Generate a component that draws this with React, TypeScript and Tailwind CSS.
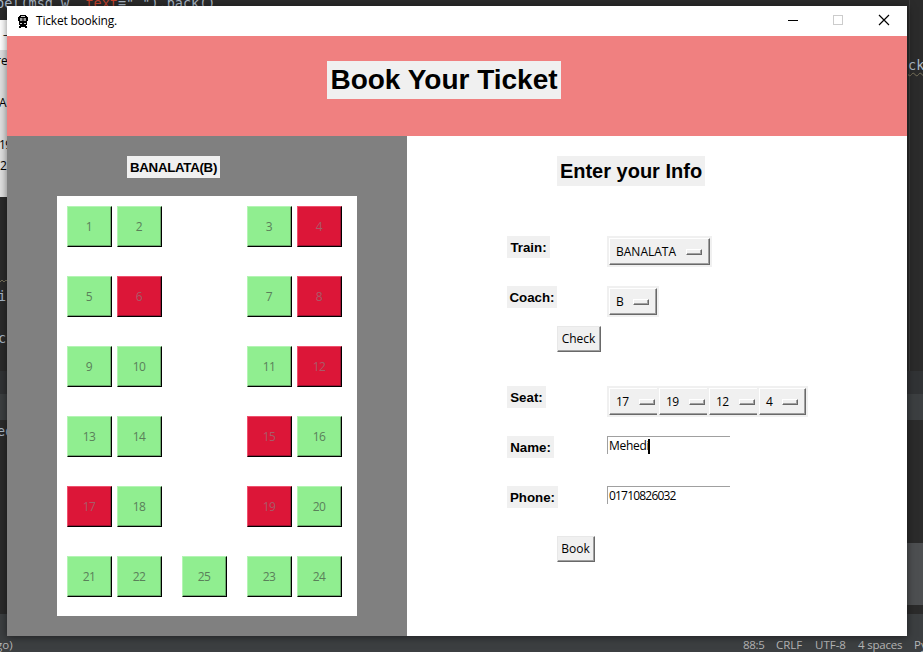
import React from "react";

const ui = "font-['Open_Sans','Noto_Sans',sans-serif] text-[12px]";
const heading = "font-['Liberation_Sans',Arial,sans-serif] font-bold text-black whitespace-nowrap";
const mono = "font-['DejaVu_Sans_Mono',monospace] text-[13.5px]";

const booked = new Set([4, 6, 8, 12, 15, 17, 19]);
const rows: number[][] = [
  [1, 2, 3, 4],
  [5, 6, 7, 8],
  [9, 10, 11, 12],
  [13, 14, 15, 16],
  [17, 18, 19, 20],
];

function Seat({ n }: { n: number }) {
  const tone = booked.has(n)
    ? "bg-[#dc1638] border-t-[#f0506e] border-l-[#f0506e] shadow-[inset_-1px_-1px_0_#a01030] text-[#a85c68]"
    : "bg-[#90ee90] border-t-[#b4f5b4] border-l-[#b4f5b4] shadow-[inset_-1px_-1px_0_#6aa86a] text-[#5a805a]";
  return (
    <button
      className={`${ui} ${tone} flex h-[41px] w-[45px] shrink-0 items-center justify-center border border-r-black border-b-black pr-px leading-none tracking-[-0.5px]`}
    >
      <span>{n}</span>
    </button>
  );
}

function Label({ text, width }: { text: string; width: string }) {
  return (
    <div className="w-[100px] shrink-0">
      <div className={`${heading} ${width} flex h-[22px] items-center justify-center bg-[#f0f0f0] pt-[2px] text-[13.3px]`}>{text}</div>
    </div>
  );
}

function Menu({ value, width, outer }: { value: string; width: string; outer: string }) {
  return (
    <div className={`${outer} h-[31px] shrink-0 overflow-hidden bg-[#f0f0f0] pt-[2px] pl-[2px]`}>
      <div
        className={`${ui} ${width} flex h-[27px] items-center justify-between border border-t-white border-l-white border-r-[#696969] border-b-[#696969] pr-[7px] pl-[6px] leading-none text-black shadow-[inset_-1px_-1px_0_#a0a0a0]`}
      >
        <span className={value.length > 2 ? "" : "tracking-[-0.6px]"}>{value}</span>
        <i className="h-[6px] w-[16px] border border-t-white border-l-white border-r-[#696969] border-b-[#696969] shadow-[inset_-1px_-1px_0_#a0a0a0]" />
      </div>
    </div>
  );
}

function PushButton({ text, width }: { text: string; width: string }) {
  return (
    <button
      className={`${ui} ${width} ml-[50px] flex h-[26px] items-center justify-center border border-t-[#e8e8e8] border-l-[#e8e8e8] border-r-[#696969] border-b-[#696969] bg-[#f0f0f0] pr-px leading-none text-black shadow-[inset_-1px_-1px_0_#a0a0a0]`}
    >
      {text}
    </button>
  );
}

function Entry({ value, caret, tracking }: { value: string; caret?: boolean; tracking: string }) {
  return (
    <div className={`${ui} flex h-[18px] w-[123px] items-center border-t border-l border-[#a0a0a0] pt-px pl-[1px] leading-none text-black`}>
      <span className={tracking}>{value}</span>
      {caret && <i className="-ml-px h-[15px] w-[2px] bg-black" />}
    </div>
  );
}

function Editor() {
  return (
    <div className="flex h-full flex-col bg-[#2b2b2b] font-['Open_Sans',sans-serif] text-[12px] text-[#a9b7c6]">
      <div className="flex h-[371px] justify-between">
        <div className="flex w-[300px] flex-col">
          <div className={`${mono} h-5 overflow-hidden whitespace-pre`}>
            <div className="-mt-[6px] -ml-[4px] leading-[18px]">
              bel(msg_w<span className="text-[#cc7832]">, </span>
              <span className="text-[#c4432e]">text</span>="_").pack()
            </div>
          </div>
          <div className="h-[177px] w-[7px] overflow-hidden bg-[#e1e1e1] whitespace-nowrap text-black">
            <div className="h-[30px] bg-white pl-[3px] text-[10px] leading-[28px]">–</div>
            <div className="-ml-[4px] h-[44px] leading-[22px]">re</div>
            <div className="-ml-px h-[42px] leading-[18px]">A</div>
            <div className="-ml-px h-[21px] leading-[18px] tracking-[-0.6px]">19</div>
            <div className="leading-[18px]">2</div>
          </div>
          <div className={`${mono} h-[174px] w-[7px] overflow-hidden pt-[77px] leading-[22px]`}>
            <div className="-mt-px h-[22px]">
              <svg className="h-[22px] w-[7px]" viewBox="0 0 7 22"><path d="M0 9l2-2 2 2 2-2 1 1" fill="none" stroke="#77715a" /></svg>
            </div>
            <div className="-mt-[10px] -ml-[2px] h-[42px]">i</div>
            <div className="-ml-[2px]">c</div>
          </div>
        </div>
        <div className={`${mono} h-full w-[14px] border-l border-[#3d3d3d] pt-[56px] leading-[18px]`}>
          <span className="-ml-[2px] underline decoration-[#77715a] decoration-wavy decoration-1 underline-offset-2">ck</span>
        </div>
      </div>
      <div className="h-[23px] shrink-0 bg-[#313335]" />
      <div className="h-[26px] shrink-0 bg-[#3c3f41]" />
      <div className="flex h-[194px] shrink-0 justify-between">
        <div className={`${mono} flex w-[7px] flex-col overflow-hidden`}>
          <div className="-ml-[3px] h-[193px] leading-[22px]">ed</div>
        </div>
        <div className="flex w-[16px] flex-col">
          <div className="h-[123px]" />
          <div className="h-[62px] bg-[#4d4f51]" />
        </div>
      </div>
      <div className="flex h-[38px] shrink-0 items-end justify-between overflow-hidden bg-[#3c3f41] text-[11.5px] leading-[14px] whitespace-nowrap text-[#b5b5b5]">
        <span className="-ml-[4px]">go)</span>
        <div className="flex w-[180px] overflow-hidden">
          <span className="w-[33px] shrink-0 tracking-[-0.3px]">88:5</span>
          <span className="w-[39px] shrink-0">CRLF</span>
          <span className="w-[43px] shrink-0">UTF-8</span>
          <span className="w-[56px] shrink-0 tracking-[-0.2px]">4 spaces</span>
          <span>Python</span>
        </div>
      </div>
    </div>
  );
}

function TitleBar() {
  return (
    <div className="flex h-[30px] shrink-0 items-center bg-white">
      <svg className="ml-[10px] size-[13px]" viewBox="0 0 13 13" fill="none" shapeRendering="crispEdges">
        <path d="M3 0h6v1h1v1h1v4h-1v4H9v1h1v2H8v-1H4v1H2v-2h1v-1H2V6H1V2h1V1h1z" fill="#000" />
        <path d="M3 3h2.5v3H3zM6.5 3H9v3H6.500z" fill="#9a9a9a" shapeRendering="auto" />
        <path d="M3 8h2v1H3zM7 8h2v1H7zM4 1h4v1H4z" fill="#d0d0d0" />
      </svg>
      <span className={`${ui} ml-[6px] tracking-[-0.2px] text-black`}>Ticket booking.</span>
      <svg className="ml-auto h-[30px] w-[119px]" viewBox="788 6 119 30" fill="none" shapeRendering="crispEdges">
        <path d="M788 20.5h10" stroke="#000" />
        <path d="M833.5 15.5h9v9h-9z" stroke="#ccc" />
        <path d="M879 15l10 10M889 15l-10 10" stroke="#000" strokeWidth="1.2" shapeRendering="auto" />
      </svg>
    </div>
  );
}

export default function App() {
  return (
    <div className="relative h-[652px] w-[923px] overflow-hidden">
      <Editor />
      <div className="absolute top-[6px] left-[7px] flex h-[630px] w-[900px] flex-col bg-white shadow-[0_1px_8px_rgba(0,0,0,0.5)]">
        <TitleBar />
        <header className="flex h-[100px] shrink-0 items-start bg-[#f08080] pt-[25px] pl-[320px]">
          <h1 className={`${heading} flex h-[38px] w-[234px] items-center justify-center bg-[#f0f0f0] text-[28px]`}>Book Your Ticket</h1>
        </header>
        <main className="flex flex-1">
          <section className="w-[400px] bg-[#808080] px-[50px] pt-5">
            <h2 className={`${heading} ml-[70px] flex h-[22px] w-[93px] items-center justify-center bg-[#f0f0f0] pt-[2px] text-[13.3px] tracking-[-0.3px]`}>
              BANALATA(B)
            </h2>
            <div className="mt-[18px] flex h-[420px] flex-col gap-[29px] bg-white p-[10px]">
              {rows.map((r) => (
                <div key={r[0]} className="flex gap-[5px]">
                  <Seat n={r[0]} />
                  <Seat n={r[1]} />
                  <div className="w-[75px]" />
                  <Seat n={r[2]} />
                  <Seat n={r[3]} />
                </div>
              ))}
              <div className="flex gap-[5px]">
                <Seat n={21} />
                <Seat n={22} />
                <div className="mx-[15px]">
                  <Seat n={25} />
                </div>
                <Seat n={23} />
                <Seat n={24} />
              </div>
            </div>
          </section>
          <section className="flex-1 bg-white pt-5 pl-[100px]">
            <div className="h-20 pl-[50px]">
              <h2 className={`${heading} flex h-[30px] w-[148px] items-center justify-center bg-[#f0f0f0] text-[20px]`}>Enter your Info</h2>
            </div>
            <div className="flex h-[50px]">
              <Label text="Train:" width="w-[43px]" />
              <Menu value="BANALATA" width="w-[101px]" outer="w-[105px]" />
            </div>
            <div className="flex h-10">
              <Label text="Coach:" width="w-[50px]" />
              <Menu value="B" width="w-[48px]" outer="w-[52px]" />
            </div>
            <div className="h-[60px]">
              <PushButton text="Check" width="w-[44px]" />
            </div>
            <div className="flex h-[50px]">
              <Label text="Seat:" width="w-[39px]" />
              <Menu value="17" width="w-[54px]" outer="w-[50px]" />
              <Menu value="19" width="w-[54px]" outer="w-[50px]" />
              <Menu value="12" width="w-[54px]" outer="w-[50px]" />
              <Menu value="4" width="w-[47px]" outer="w-[51px]" />
            </div>
            <div className="flex h-[50px]">
              <Label text="Name:" width="w-[47px]" />
              <Entry value="Mehedi" caret tracking="tracking-[-0.3px]" />
            </div>
            <div className="flex h-[50px]">
              <Label text="Phone:" width="w-[51px]" />
              <Entry value="01710826032" tracking="tracking-[-0.8px]" />
            </div>
            <PushButton text="Book" width="w-[38px]" />
          </section>
        </main>
      </div>
    </div>
  );
}
